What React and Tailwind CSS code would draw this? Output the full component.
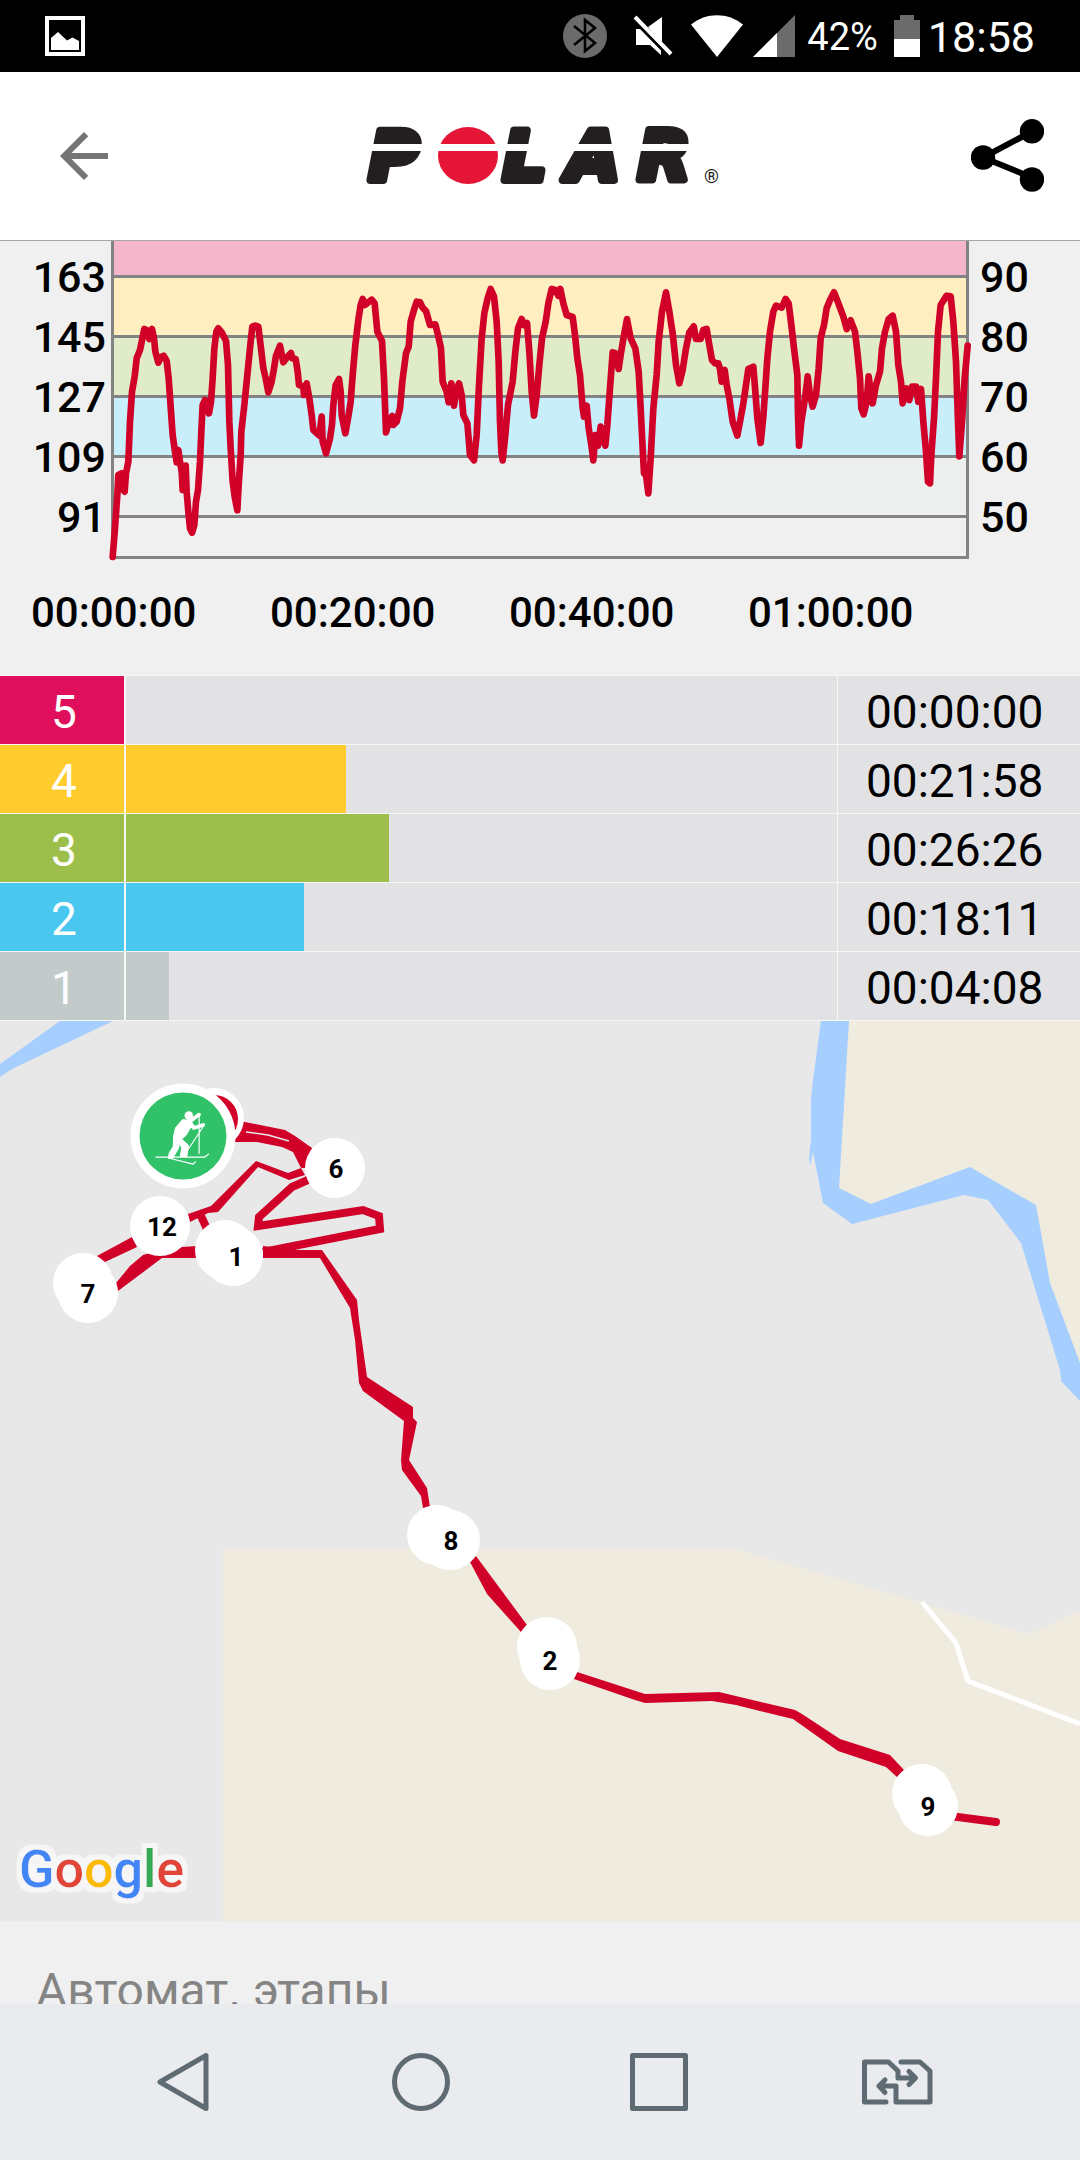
import React from "react";

const bpmTicks = [163, 145, 127, 109, 91];
const percentTicks = [90, 80, 70, 60, 50];
const timeTicks = ["00:00:00", "00:20:00", "00:40:00", "01:00:00"];

const zones = [
  { zone: 5, time: "00:00:00", percent: 0, color: "bg-[#e00f5b]" },
  { zone: 4, time: "00:21:58", percent: 31, color: "bg-[#ffcb2d]" },
  { zone: 3, time: "00:26:26", percent: 37, color: "bg-[#9dbe4b]" },
  { zone: 2, time: "00:18:11", percent: 25, color: "bg-[#49c7ef]" },
  { zone: 1, time: "00:04:08", percent: 6, color: "bg-[#c2cbca]" },
];

const heartRate =
  "338,966 345,880 352,780 355,720 364,715 366,760 374,770 378,715 385,680 390,560 396,470 404,425 410,370 420,345 433,282 440,285 448,312 456,282 462,310 466,350 475,383 483,366 491,362 500,378 506,430 513,530 518,600 525,650 530,682 535,645 540,680 545,710 548,765 557,692 560,770 565,830 570,880 576,893 583,870 588,800 594,765 600,680 604,590 608,510 615,495 621,500 627,535 633,500 638,430 643,340 649,290 655,280 665,292 678,318 684,390 688,560 692,640 698,740 704,785 712,826 716,750 722,660 724,590 732,520 740,440 746,380 752,320 757,275 766,272 775,275 783,340 790,400 797,430 805,472 815,440 822,400 828,362 840,332 850,382 862,366 873,354 877,370 887,372 893,410 897,450 910,455 912,480 920,445 928,490 935,540 940,585 958,602 965,545 968,620 978,655 990,610 996,570 1000,510 1007,450 1017,432 1022,470 1025,540 1036,595 1045,545 1052,500 1058,420 1066,330 1075,255 1082,210 1088,192 1095,210 1115,194 " +
  "1124,205 1132,290 1146,318 1152,430 1158,592 1167,560 1177,543 1180,570 1190,560 1200,520 1207,440 1218,355 1226,335 1232,260 1242,225 1250,200 1260,202 1268,218 1278,228 1290,270 1306,268 1314,300 1323,340 1328,440 1340,470 1346,502 1354,445 1362,512 1368,470 1377,445 1385,480 1390,540 1402,565 1410,660 1422,676 1430,600 1437,450 1445,310 1453,235 1463,190 1472,162 1482,185 1490,260 1496,380 1500,560 1504,650 1508,676 1516,600 1524,510 1538,440 1546,350 1554,280 1565,252 1572,270 1581,264 1588,350 1595,470 1602,542 1610,480 1618,390 1626,310 1637,260 1645,205 1655,162 1666,165 1675,182 1681,162 1690,205 1700,240 1718,246 1725,300 1732,370 1740,420 1748,520 1752,545 1760,512 1766,580 1774,630 1780,676 1786,600 1794,632 1802,575 1810,610 1816,632 1822,570 1830,460 1838,352 1848,355 1856,402 1862,360 1872,300 1881,252 1892,310 1906,340 1916,410 1922,520 1928,640 1932,715 1938,720 1945,775 1952,670 1960,520 1970,420 1976,320 1986,230 1998,172 2008,230 2018,295 2028,390 2038,445 2048,405 2058,340 2068,292 2081,274 2088,312 2102,312 2110,285 2120,282 " +
  "2128,330 2136,375 2145,385 2155,385 2160,402 2165,440 2174,405 2180,450 2188,490 2198,560 2212,602 2220,560 2230,505 2238,450 2245,402 2260,395 2266,470 2272,550 2282,624 2290,545 2296,460 2302,370 2310,290 2320,230 2328,212 2345,218 2357,192 2366,205 2374,270 2382,340 2392,420 2394,540 2397,632 2404,560 2415,490 2423,424 2430,480 2438,515 2448,480 2456,400 2462,310 2472,270 2480,220 2490,195 2502,172 2515,205 2530,245 2540,282 2552,256 2565,290 2572,350 2580,430 2584,520 2591,538 2600,500 2606,424 2612,470 2618,505 2628,450 2640,410 2646,340 2655,290 2666,252 2678,242 2688,290 2695,390 2703,440 2708,505 2718,460 2728,495 2736,455 2748,455 2755,500 2763,462 2770,560 2778,650 2784,740 2790,745 2794,660 2802,550 2808,430 2814,290 2822,210 2840,182 2852,184 2860,260 2868,380 2874,560 2878,664 2886,560 2894,430 2903,332";

// Kilometre markers; `under` is the older marker that the label lies on
const markers = [
  { label: "6", x: 335, y: 1168, tx: 336, ty: 1178 },
  { label: "12", x: 160, y: 1226, tx: 162, ty: 1236 },
  { label: "7", x: 88, y: 1293, under: [83, 1283], tx: 88, ty: 1303 },
  { label: "1", x: 233, y: 1256, under: [225, 1250], tx: 236, ty: 1266 },
  { label: "8", x: 450, y: 1540, under: [437, 1535], tx: 451, ty: 1550 },
  { label: "2", x: 550, y: 1660, under: [547, 1647], tx: 550, ty: 1670 },
  { label: "9", x: 928, y: 1806, under: [922, 1794], tx: 928, ty: 1816 },
];

function StatusBar() {
  return (
    <div className="flex h-[72px] shrink-0 items-center justify-between bg-black px-[45px] text-white">
      <svg className="size-10" viewBox="0 0 40 40" aria-hidden="true">
        <path d="M0 0h40v40H0zM4 4v32h32V4z" fill="currentColor" fillRule="evenodd" />
        <path d="M6 22l7-6 9 8.500 5.500-3L34 25v9H6z" fill="currentColor" />
      </svg>
      <div className="flex items-center">
        <svg className="mr-[26px] size-11" viewBox="0 0 44 44" aria-hidden="true">
          <circle cx="22" cy="22" r="22" fill="#6b6b6b" />
          <path d="M11 12l21 17-10 8V6l10 8-21 17" fill="none" stroke="#000" strokeWidth="2.600" />
        </svg>
        <svg className="mr-[18px] h-[42px] w-10" viewBox="0 0 40 42" aria-hidden="true">
          <path d="M15 12L29 2v27zM3 14h5l20 20v6L17 30H3z" fill="#fff" />
          <path d="M2 2l36 37" stroke="#fff" strokeWidth="4" />
          <path d="M0 5l34 35" stroke="#000" strokeWidth="2.500" />
        </svg>
        <svg className="mr-[10px] h-[42px] w-[52px]" viewBox="0 0 52 42" aria-hidden="true">
          <path d="M26 42L0 9.500C15-3 37-3 52 9.500z" fill="#fff" />
        </svg>
        <svg className="mr-3 size-[42px]" viewBox="0 0 42 42" aria-hidden="true">
          <path d="M42 0v42H0z" fill="#6b6b6b" />
          <path d="M24 18v24H0z" fill="#fff" />
        </svg>
        <span className="mr-4 pt-0.5 text-[38px] leading-[42px]">42%</span>
        <svg className="mr-2 h-[42px] w-[26px]" viewBox="0 0 26 42" aria-hidden="true">
          <path d="M6 0h14v5h6v19H0V5h6z" fill="#6b6b6b" />
          <path d="M0 24h26v18H0z" fill="#fff" />
        </svg>
        <span className="pt-0.5 text-[43px] leading-[42px]">18:58</span>
      </div>
    </div>
  );
}

function PolarLogo() {
  return (
    <svg className="h-[100px] w-[368px]" viewBox="356 106 368 100" role="img" aria-label="Polar">
      <g
        className="font-['DejaVu_Sans',sans-serif] text-[68px] font-bold italic"
        fill="#231f20"
        stroke="#231f20"
        strokeWidth="8"
        strokeLinejoin="round"
      >
        <text x="369" y="180">P</text>
        <text x="503" y="180">L</text>
        <text x="567" y="180">A</text>
        <text x="638" y="180">R</text>
      </g>
      <ellipse cx="468" cy="155.500" rx="30" ry="28.500" fill="#e41536" />
      <path d="M358 147.500h346" stroke="#fff" strokeWidth="7" />
      <text x="704" y="183" className="text-[19px]" fill="#231f20">®</text>
    </svg>
  );
}

function Header() {
  return (
    <header className="grid h-[169px] shrink-0 grid-cols-[1fr_auto_1fr] items-center border-b border-[#a6a6a6] bg-white">
      <div className="flex pl-12">
        <button type="button" aria-label="Back">
          <svg className="size-[72px]" viewBox="0 0 24 24" fill="#757575">
            <path d="M20 11H7.830l5.590-5.590L12 4l-8 8 8 8 1.410-1.410L7.830 13H20z" />
          </svg>
        </button>
      </div>
      <PolarLogo />
      <div className="flex justify-end pr-9">
        <button type="button" aria-label="Share">
          <svg className="h-[74px] w-[73px]" viewBox="971 119 73 74">
            <path d="M1032 131.500l-49 26 49 20" fill="none" stroke="#000" strokeWidth="6" />
            <circle cx="983" cy="157.500" r="12.200" />
            <circle cx="1032" cy="131.300" r="12.200" />
            <circle cx="1032" cy="179.500" r="12.200" />
          </svg>
        </button>
      </div>
    </header>
  );
}

function HeartRateChart() {
  return (
    <section className="font-medium">
      <div className="flex text-[43px]">
        <div className="w-[111px] pr-[5px] pt-1.5 text-right">
          {bpmTicks.map((tick) => (
            <div key={tick} className="h-[60px] leading-[60px]">
              {tick}
            </div>
          ))}
        </div>
        <svg
          className="h-[318px] min-w-0 flex-1 overflow-visible"
          viewBox="333 18 2574 954"
          preserveAspectRatio="none"
          role="img"
          aria-label="Heart rate"
        >
          <rect x="333" y="18" width="2574" height="106" fill="#f5b6cc" />
          <rect x="333" y="124" width="2574" height="180" fill="#ffefc0" />
          <rect x="333" y="304" width="2574" height="180" fill="#e0ebc9" />
          <rect x="333" y="484" width="2574" height="180" fill="#c8eefa" />
          <rect x="333" y="664" width="2574" height="180" fill="#edefee" />
          <path
            d="M333 124.500H2907M333 304.500H2907M333 484.500H2907M333 664.500H2907M333 844.500H2907M333 967.500H2907M337.500 18V972M2902.500 18V972"
            stroke="#838383"
            strokeWidth="9"
          />
          <polyline
            points={heartRate}
            fill="none"
            stroke="#d10029"
            strokeWidth="20"
            strokeLinejoin="round"
            strokeLinecap="round"
          />
        </svg>
        <div className="w-[111px] pl-[11px] pt-1.5">
          {percentTicks.map((tick) => (
            <div key={tick} className="h-[60px] leading-[60px]">
              {tick}
            </div>
          ))}
        </div>
      </div>
      <div className="flex pb-[37px] pl-[31px] pt-[29px] text-[42px] leading-[50px]">
        {timeTicks.map((tick) => (
          <span key={tick} className="w-[239px]">
            {tick}
          </span>
        ))}
      </div>
    </section>
  );
}

function ZoneTable() {
  return (
    <table
      aria-label="Heart rate zones"
      className="w-full table-fixed border-separate border-spacing-0 border-t border-[#f6f6f6] bg-[#e2e2e4] text-[46px] leading-[60px]"
    >
      <colgroup>
        <col className="w-[126px]" />
        <col />
        <col className="w-[243px]" />
      </colgroup>
      <tbody>
        {zones.map(({ zone, time, percent, color }) => (
          <tr key={zone}>
            <th
              scope="row"
              className={`h-[69px] border-b border-r-2 border-[#f6f6f6] pb-0 pl-1 pr-0 pt-[3px] text-center font-normal text-white ${color}`}
            >
              {zone}
            </th>
            <td className="h-[69px] border-b border-[#f6f6f6] p-0">
              <div className={`h-[68px] ${color}`} style={{ width: `${percent}%` }} />
            </td>
            <td className="h-[69px] border-b border-l border-[#f6f6f6] pb-0 pl-7 pr-0 pt-[3px]">{time}</td>
          </tr>
        ))}
      </tbody>
    </table>
  );
}

function Skier() {
  return (
    <g transform="translate(0 1020) scale(0.333)" fill="#fff" stroke="#fff" strokeLinejoin="round">
      <circle cx="567" cy="287" r="13" stroke="none" />
      <path d="M548 299l25 3 8 14-12 12-10 18-16 14-22-8 6-28z" strokeWidth="3" />
      <path d="M522 345l18 15-4 26-18 30h-12l2-16 12-20z" strokeWidth="3" />
      <path d="M536 348l14 14 16 14-5 34h-20l5-26-12-18z" strokeWidth="3" />
      <g fill="none" strokeLinecap="round">
        <path d="M570 306l12 18 28-9M574 302l24-18" strokeWidth="11" />
        <path d="M598 284v117M613 316l-62 94M468 412h146l12-9M512 416l68 17 7-7" strokeWidth="3.500" />
      </g>
    </g>
  );
}

function RouteMap() {
  return (
    <svg className="block h-auto w-full" viewBox="0 1021 1080 900" role="img" aria-label="Route map">
      <defs>
        <filter id="halo" x="-10%" y="-20%" width="120%" height="140%">
          <feMorphology in="SourceAlpha" operator="dilate" radius="5" result="grown" />
          <feFlood floodColor="#f6f6f6" />
          <feComposite in2="grown" operator="in" result="halo" />
          <feMerge>
            <feMergeNode in="halo" />
            <feMergeNode in="SourceGraphic" />
          </feMerge>
        </filter>
      </defs>

      {/* Land, river and road */}
      <rect x="0" y="1021" width="1080" height="900" fill="#e8e8e8" />
      <path d="M223 1921V1549H736L1029 1634L1080 1611V1921z" fill="#efebde" />
      <path d="M849 1021L839 1188L871 1204L970 1167L1036 1205L1050 1283L1080 1363V1021z" fill="#efebde" />
      <path
        d="M821 1021L813 1080L811 1098V1140L809 1157L810 1166L813 1152L823 1203L852 1224L964 1195L988 1200L1021 1243L1060 1370L1061 1381L1080 1401V1363L1050 1283L1036 1205L970 1167L871 1204L839 1188L849 1021z"
        fill="#a6cfff"
      />
      <path d="M0 1064L60 1021H113L12 1069L0 1077z" fill="#a6cfff" />
      <path d="M922 1602L956 1643L968 1681L1080 1724" fill="none" stroke="#fff" strokeWidth="5" />

      {/* Route */}
      <g fill="#d10029">
        <path d="M263 1246L300 1250H322L357 1300L359 1320L367 1377L413 1407V1418L417 1422L409 1460L427 1488L430 1507L423 1508L421 1496L402 1470L401 1460L404 1421L363 1391L359 1383L355 1340L350 1308L320 1258H263z" />
        <path d="M476 1556L527 1625L521 1632L487 1594L470 1562z" />
        <path d="M577 1672L645 1694L719 1692L795 1710L802 1714L840 1739L890 1755L904 1770L897 1777L886 1767L838 1751L793 1719L736 1705L712 1701L645 1703L635 1700L574 1679z" />
        <path d="M240 1121L285 1130L295 1136L312 1148L305 1168H301L293 1152L282 1147L257 1142H233z" />
        <path d="M305 1175L289 1180L258 1167L218 1212L208 1213L190 1222L188 1214L211 1206L256 1161L288 1173L301 1168z" />
        <path d="M132 1237L137 1247L105 1262L97 1256z" />
        <path d="M116 1283L130 1266L143 1255L150 1253L182 1247L197 1246V1258H162L118 1291z" />
      </g>
      <g fill="none" stroke="#d10029" strokeWidth="8">
        <path d="M310 1179L292 1187L259 1217L258 1226L363 1210L379 1216L380 1229L263 1252" />
        <path d="M201 1216L207 1229" />
        <path d="M950 1816L996 1822" strokeLinecap="round" />
      </g>
      <path d="M246 1132L268 1135L289 1141" fill="none" stroke="#e8e8e8" strokeWidth="1.500" />

      {/* Start point and sport */}
      <circle cx="214" cy="1118" r="30" fill="#fff" />
      <circle cx="214" cy="1119" r="24" fill="#d10029" />
      <circle cx="183" cy="1136" r="52.500" fill="#fff" />
      <circle cx="183" cy="1136" r="43.500" fill="#30c169" />
      <Skier />

      {markers.map(({ label, x, y, under, tx, ty }) => (
        <g key={label}>
          {under && <circle cx={under[0]} cy={under[1]} r="30" fill="#fff" />}
          <circle cx={x} cy={y} r="30" fill="#fff" />
          <text x={tx} y={ty} textAnchor="middle" className="text-[26px] font-bold">
            {label}
          </text>
        </g>
      ))}

      <text x="19" y="1887" filter="url(#halo)" className="text-[52px] font-medium">
        <tspan fill="#4285f4">G</tspan>
        <tspan fill="#e14437">o</tspan>
        <tspan fill="#fbbc05">o</tspan>
        <tspan fill="#4285f4">g</tspan>
        <tspan fill="#34a853">l</tspan>
        <tspan fill="#e14437">e</tspan>
      </text>
    </svg>
  );
}

function NavBar() {
  return (
    <nav className="grid h-[156px] shrink-0 grid-cols-4 items-center justify-items-center bg-[#e9ebee] px-16 text-[#5f6b72]">
      <button type="button" aria-label="Back">
        <svg className="size-[60px]" viewBox="0 0 60 60" fill="none" stroke="currentColor" strokeWidth="5" strokeLinejoin="round">
          <path d="M7 30l46-26.500v53z" />
        </svg>
      </button>
      <button type="button" aria-label="Home">
        <svg className="size-[60px]" viewBox="0 0 60 60" fill="none" stroke="currentColor" strokeWidth="5">
          <circle cx="30" cy="30" r="26.500" />
        </svg>
      </button>
      <button type="button" aria-label="Recent apps">
        <svg className="size-[60px]" viewBox="0 0 60 60" fill="none" stroke="currentColor" strokeWidth="5" strokeLinejoin="round">
          <path d="M3.500 3.500h53v53h-53z" />
        </svg>
      </button>
      <button type="button" aria-label="Switch SIM card">
        <svg
          className="h-[46px] w-[71px]"
          viewBox="0 0 71 46"
          fill="none"
          stroke="currentColor"
          strokeWidth="5"
          strokeLinecap="round"
          strokeLinejoin="round"
        >
          <path d="M24 43H2.500V3h24L36 12v7h17M47 12.500l6.500 6.500-6.500 6.500" />
          <path d="M39 3h19l10 9v31H34V27H17M23 21l-6 6 6 6.500" />
        </svg>
      </button>
    </nav>
  );
}

export default function App() {
  return (
    <div className="flex h-screen flex-col bg-[#f0f0f0] font-['Roboto',sans-serif] text-black">
      <StatusBar />
      <Header />
      <main className="min-h-0 flex-1 overflow-hidden">
        <HeartRateChart />
        <ZoneTable />
        <RouteMap />
        <h2 className="px-9 py-10 text-[48px] leading-[60px] text-[#858585]">Автомат. этапы</h2>
      </main>
      <NavBar />
    </div>
  );
}
